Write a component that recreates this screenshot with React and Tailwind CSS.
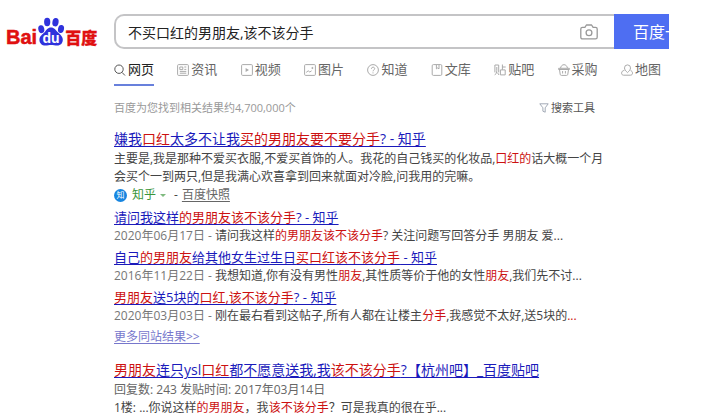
import { useState } from "react";

const iconProps = {
  viewBox: "0 0 12 12",
  fill: "none",
  stroke: "currentColor",
  className: "w-3 h-3 shrink-0",
  "aria-hidden": true,
};

const SearchIcon = () => (
  <svg {...iconProps} strokeWidth="1">
    <circle cx="5" cy="5.2" r="4.2" />
    <path d="M8 8.4 11 11.5" />
  </svg>
);

const NewsIcon = () => (
  <svg {...iconProps} strokeWidth="1">
    <rect x="0.6" y="0.6" width="10.8" height="10.8" rx="1" />
    <path d="M2.8 3h3v2.6h-3zM7.3 3h2M7.3 5.4h2M2.8 7.4h6.5M2.8 9.2h6.5" />
  </svg>
);

const VideoIcon = () => (
  <svg {...iconProps} strokeWidth="1">
    <rect x="0.6" y="0.6" width="10.8" height="10.8" rx="1" />
    <path d="M4.6 3.9 8 6 4.6 8.1z" fill="currentColor" stroke="none" />
  </svg>
);

const ImageIcon = () => (
  <svg {...iconProps} strokeWidth="1">
    <rect x="0.6" y="0.6" width="10.8" height="10.8" rx="1" />
    <path d="M2.2 8.4 4.2 6.8 5.8 8 7.6 6.8" />
    <circle cx="8.4" cy="4" r="0.6" fill="currentColor" />
  </svg>
);

const KnowIcon = () => (
  <svg {...iconProps} strokeWidth="1">
    <circle cx="6" cy="6" r="5.4" />
    <path d="M4.4 4.8C4.4 2.6 7.7 2.7 7.7 4.7 7.7 5.9 6 5.9 6 7.3M6 8.4v1" />
  </svg>
);

const DocIcon = () => (
  <svg {...iconProps} strokeWidth="1">
    <rect x="1.2" y="0.6" width="9.6" height="10.8" rx="1.2" />
    <path d="M5.4 0.8v4.1l1.3-1 1.3 1V0.8" />
  </svg>
);

const TiebaIcon = () => (
  <svg {...iconProps} strokeWidth="1">
    <path d="M0.9 8.4V1h3.8v7.4M2.8 3v3.4C2.8 8.6 2 10 0.6 11.2M3.4 8.6 5 11M8.4 0.5v5.3M8.4 3h3.3M6.4 5.9h4.8v5H6.4z" />
  </svg>
);

const BasketIcon = () => (
  <svg {...iconProps} strokeWidth="1">
    <path d="M0.6 4.3h10.8v1.2H0.6zM1.5 5.5l.7 4.8c.1.7.5 1.1 1.2 1.1h5.2c.7 0 1.1-.4 1.2-1.1l.7-4.8M2.5 4.2C3 2 4.2.7 6 .7S9 2 9.5 4.2M4.6 7v2.5M7.4 7v2.5" />
  </svg>
);

const MapIcon = () => (
  <svg {...iconProps} strokeWidth="1">
    <path d="M6.5 8.6C4.6 6.9 3.5 5.5 3.5 3.9a3 3 0 0 1 6 0c0 1.6-1.1 3-3 4.7z" />
    <path d="M3.4 6.4C1.6 6.6.6 7.6.6 9.2c0 1.3.9 2 2 2h6.9c1.2 0 2-.8 2-2 0-1.4-.7-2.3-1.9-2.6" />
  </svg>
);

const CameraIcon = () => (
  <svg
    viewBox="0 0 18 16"
    fill="none"
    stroke="currentColor"
    strokeWidth="1.3"
    strokeLinejoin="round"
    className="w-[18px] h-4"
    aria-hidden="true"
  >
    <path d="M2.5 3.4h2.4L6.4 1h5.2l1.5 2.4h2.4c1 0 1.7.7 1.7 1.7v8.1c0 1-.7 1.7-1.7 1.7h-13c-1 0-1.7-.7-1.7-1.7V5.1c0-1 .7-1.7 1.7-1.7z" />
    <circle cx="9" cy="8.7" r="2.9" />
  </svg>
);

const FunnelIcon = () => (
  <svg
    viewBox="0 0 10 10"
    fill="none"
    stroke="currentColor"
    strokeWidth="0.9"
    className="w-[10px] h-[10px] text-gray-400"
    aria-hidden="true"
  >
    <path d="M.8.8h8.4L6.2 4.8v4.4l-2.3-1V4.8z" />
  </svg>
);

const Logo = () => (
  <a href="#" aria-label="Baidu 百度" className="flex items-center h-7 text-[#e01010] font-bold">
    <span className="text-[20px] leading-7 font-['Liberation_Sans',sans-serif] [-webkit-text-stroke:0.5px_#e01010]">
      Bai
    </span>
    <svg viewBox="0 0 28 29" className="w-7 h-[29px] shrink-0 mb-3">
      <g fill="#2f32dc">
        <ellipse cx="4.3" cy="12.2" rx="3" ry="4" transform="rotate(-12 4.3 12.2)" />
        <ellipse cx="10.2" cy="5" rx="3.1" ry="4.2" />
        <ellipse cx="18.5" cy="5.2" rx="3.1" ry="4.2" transform="rotate(10 18.5 5.2)" />
        <ellipse cx="24" cy="12" rx="3" ry="4" transform="rotate(12 24 12)" />
        <path d="M14 10.5c-3.3 0-4.6 2.6-6.4 4.7-2 2.3-5.2 3.6-5.2 7.5 0 3.5 2.5 5.8 6 5.8 2.2 0 3.8-.6 5.8-.6s3.8.6 6 .6c3.5 0 5.6-2.4 5.6-5.8 0-3.9-3.3-5.5-5.3-7.7-1.8-2-3.2-4.5-6.5-4.5z" />
      </g>
      <text
        x="14"
        y="26"
        textAnchor="middle"
        fill="#fff"
        fontSize="14"
        fontWeight="bold"
        fontFamily="Liberation Sans, sans-serif"
      >
        du
      </text>
    </svg>
    <span className="text-base leading-7 font-['Noto_Sans_CJK_SC',sans-serif] font-black [-webkit-text-stroke:0.3px_#e01010]">
      百度
    </span>
  </a>
);

const TABS = [
  { label: "网页", Icon: SearchIcon },
  { label: "资讯", Icon: NewsIcon },
  { label: "视频", Icon: VideoIcon },
  { label: "图片", Icon: ImageIcon },
  { label: "知道", Icon: KnowIcon },
  { label: "文库", Icon: DocIcon },
  { label: "贴吧", Icon: TiebaIcon },
  { label: "采购", Icon: BasketIcon },
  { label: "地图", Icon: MapIcon },
];

// Matched keywords are wrapped in asterisks
const RELATED = [
  {
    title: "请问我这样*的男朋友该不该分手*? - 知乎",
    date: "2020年06月17日",
    text: "请问我这样*的男朋友该不该分手*? 关注问题写回答分手 男朋友 爱...",
  },
  {
    title: "自己*的男朋友*给其他女生过生日*买口红该不该分手* - 知乎",
    date: "2016年11月22日",
    text: "我想知道,你有没有男性*朋友*,其性质等价于他的女性*朋友*,我们先不讨...",
  },
  {
    title: "*男朋友*送5块的*口红,该不该分手*? - 知乎",
    date: "2020年03月03日",
    text: "刚在最右看到这帖子,所有人都在让楼主*分手*,我感觉不太好,送5块的*...*",
  },
];

const Highlight = ({ text }) =>
  text.split("*").map((part, i) =>
    i % 2 ? (
      <em key={i} className="not-italic text-[#cc1111]">
        {part}
      </em>
    ) : (
      part
    )
  );

const ResultTitle = ({ text }) => (
  <h3 className="text-sm leading-[22px]">
    <a href="#" className="text-[#1a1abb] underline underline-offset-2">
      <Highlight text={text} />
    </a>
  </h3>
);

export default function App() {
  const [query, setQuery] = useState("不买口红的男朋友,该不该分手");
  const [active, setActive] = useState("网页");

  return (
    <div className="max-w-[669px] overflow-hidden bg-white pt-[14px] text-[#444] font-['Open_Sans','Noto_Sans_CJK_SC',sans-serif]">
      <header className="flex items-start">
        <div className="w-[114px] shrink-0 pl-[6px] pt-[9px]">
          <Logo />
        </div>
        <form className="flex flex-1 min-w-0 h-[35px]" onSubmit={(e) => e.preventDefault()}>
          <div className="flex flex-1 min-w-0 items-center border-2 border-r-0 border-[#c4c4c6] rounded-l-[10px] pl-3 pr-4">
            <input
              type="text"
              aria-label="搜索"
              value={query}
              onChange={(e) => setQuery(e.target.value)}
              className="flex-1 min-w-0 pt-[2px] text-sm text-[#222] outline-none"
            />
            <button type="button" aria-label="按图片搜索" className="text-[#999]">
              <CameraIcon />
            </button>
          </div>
          <button
            type="submit"
            className="w-[55px] shrink-0 overflow-hidden whitespace-nowrap bg-[#4e6ef2] pl-[19px] text-left text-base text-white"
          >
            百度一下
          </button>
        </form>
      </header>

      <main className="pl-[114px]">
        <nav className="flex justify-between max-w-[547px] pt-2">
          {TABS.map(({ label, Icon }) => (
            <a
              key={label}
              href="#"
              onClick={() => setActive(label)}
              className={
                active === label
                  ? "flex items-center gap-[2px] h-[27px] pb-1 border-b-2 border-[#6880dc] text-[13px] text-[#222]"
                  : "flex items-center gap-[2px] h-[27px] pb-1 border-b-2 border-transparent text-[13px] text-[#666]"
              }
            >
              <span className={active === label ? "text-[#555]" : "text-[#aaa]"}>
                <Icon />
              </span>
              {label}
            </a>
          ))}
        </nav>

        <div className="flex items-center justify-between max-w-[481px] mt-[14px] text-[11px] leading-4">
          <p className="text-[#999]">百度为您找到相关结果约4,700,000个</p>
          <button type="button" className="flex items-center gap-[2px] text-[#555]">
            <FunnelIcon />
            搜索工具
          </button>
        </div>

        <article className="mt-3 text-xs leading-[18px]">
          <ResultTitle text="嫌我*口红*太多不让我*买的男朋友要不要分手*? - 知乎" />
          <p>
            <Highlight text="主要是,我是那种不爱买衣服,不爱买首饰的人。我花的自己钱买的化妆品,*口红的*话大概一个月" />
            <br />
            会买个一到两只,但是我满心欢喜拿到回来就面对冷脸,问我用的完嘛。
          </p>
          <div className="flex items-center h-[18px]">
            <span className="flex items-center justify-center w-[13px] h-[13px] mr-[5px] rounded-full bg-[#1785e0] text-[8px] leading-3 text-white">
              知
            </span>
            <a href="#" className="text-[#3a953a]">知乎</a>
            <span className="mx-1 border-x-3 border-t-3 border-x-transparent border-t-[#7fba7f]" />
            <span className="mx-1">-</span>
            <a href="#" className="text-[#666] underline underline-offset-2">百度快照</a>
          </div>

          <ul className="flex flex-col gap-[2px] mt-[3px]">
            {RELATED.map((item) => (
              <li key={item.date}>
                <h4 className="text-[13px] leading-5">
                  <a href="#" className="text-[#1a1abb] underline underline-offset-2">
                    <Highlight text={item.title} />
                  </a>
                </h4>
                <p>
                  <span className="text-[#777]">{item.date} - </span>
                  <Highlight text={item.text} />
                </p>
              </li>
            ))}
          </ul>
          <a href="#" className="block w-fit mt-[3px] text-[#7777cc] underline underline-offset-2">
            更多同站结果&gt;&gt;
          </a>
        </article>

        <article className="mt-[13px] text-xs leading-[18px]">
          <ResultTitle text="*男朋友*连只ysl*口红*都不愿意送我,我*该不该分手*?【杭州吧】_百度贴吧" />
          <p className="text-[#666]">回复数: 243 发贴时间: 2017年03月14日</p>
          <p>
            <Highlight text="1楼: ...你说这样*的男朋友*，我*该不该分手*？可是我真的很在乎..." />
          </p>
        </article>
      </main>
    </div>
  );
}
